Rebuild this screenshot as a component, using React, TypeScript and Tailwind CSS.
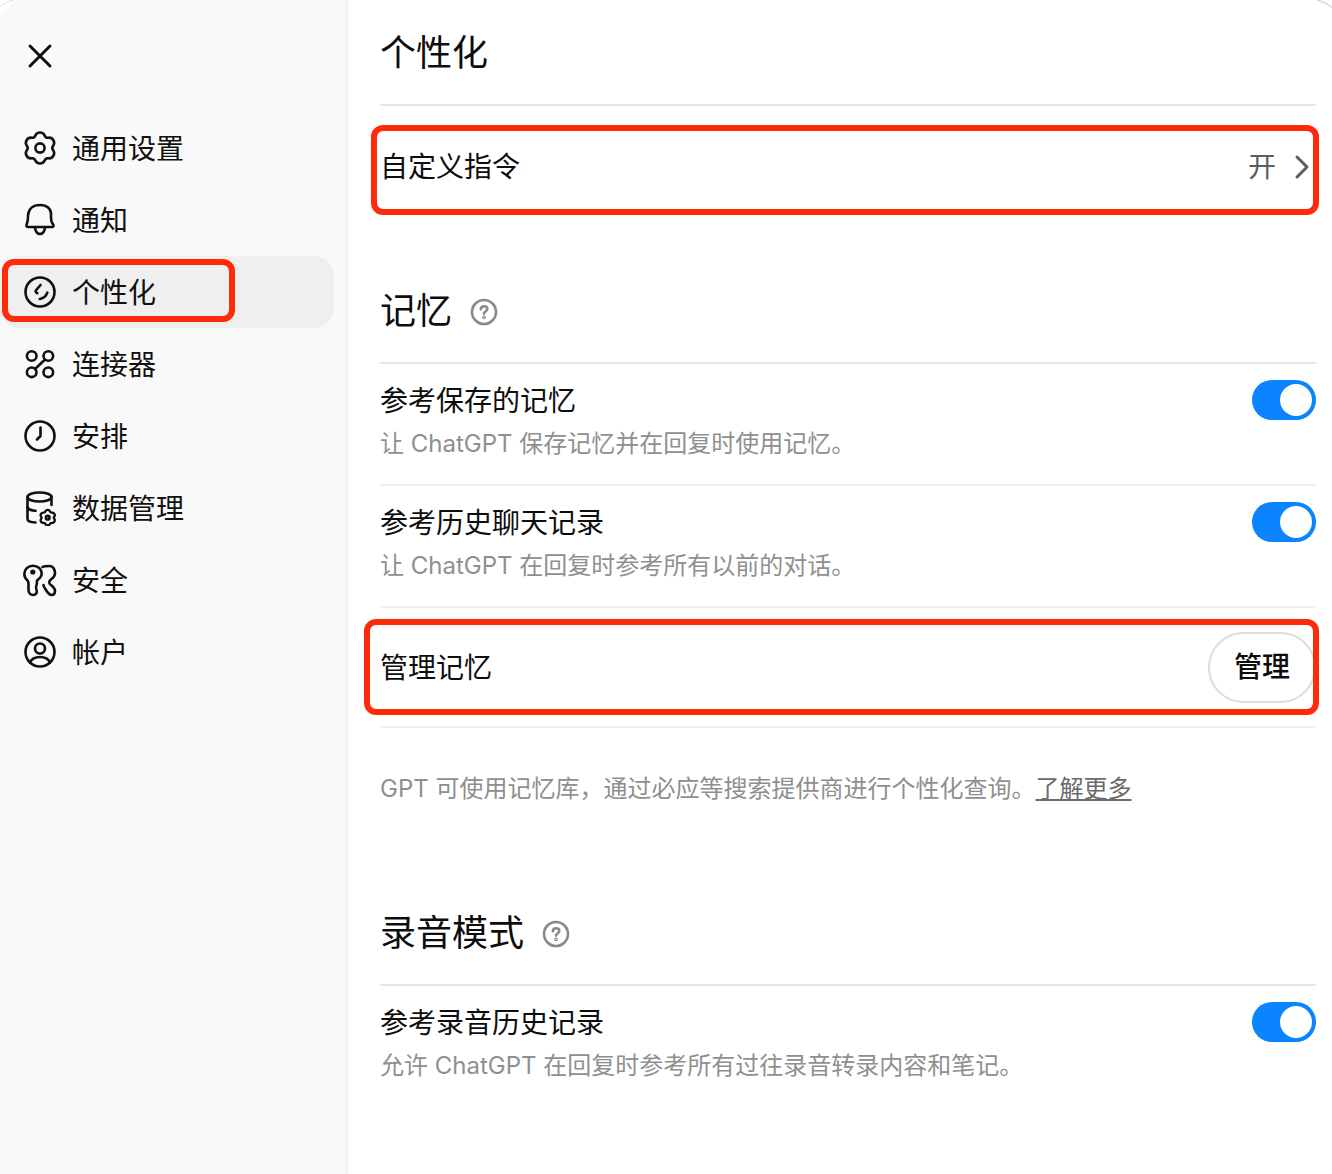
import { ReactNode } from "react";

const stroke = {
  fill: "none",
  stroke: "currentColor",
  strokeWidth: 2.6,
  strokeLinecap: "round" as const,
  strokeLinejoin: "round" as const,
};

// six lobed outline shared by the two gear icons
const gearPath =
  "M13.380 5.310A5.200 5.200 0 0 1 22.620 5.310A3.500 3.500 0 0 0 26.680 7.660A5.200 5.200 0 0 1 31.300 15.660A3.500 3.500 0 0 0 31.300 20.340A5.200 5.200 0 0 1 26.680 28.340A3.500 3.500 0 0 0 22.620 30.690A5.200 5.200 0 0 1 13.380 30.690A3.500 3.500 0 0 0 9.320 28.340A5.200 5.200 0 0 1 4.700 20.340A3.500 3.500 0 0 0 4.700 15.660A5.200 5.200 0 0 1 9.320 7.660A3.500 3.500 0 0 0 13.380 5.310Z";

function Ico({ children }: { children: ReactNode }) {
  return (
    <svg viewBox="0 0 36 36" className="w-9 h-9 shrink-0 text-[#111]" {...stroke}>
      {children}
    </svg>
  );
}

const navItems: { label: string; icon: ReactNode; active?: boolean }[] = [
  {
    label: "通用设置",
    icon: (
      <Ico>
        <circle cx="18" cy="18" r="4.600" />
        <path d={gearPath} />
      </Ico>
    ),
  },
  {
    label: "通知",
    icon: (
      <Ico>
        <path d="M4.500 23.500c0 1 .5 1.500 1.500 1.500h24c1 0 1.500-.5 1.500-1.500 0-1.500-1.500-2-2-4-.5-2-.5-3-.5-6C29.500 7 25 3 18 3S6.500 7 6 13.500c0 3 0 4-.5 6-.5 2-1 2.500-1 4z" />
        <path d="M13 25.500c.5 4 2.500 6.500 5 6.500s4.500-2.500 5-6.500" />
      </Ico>
    ),
  },
  {
    label: "个性化",
    active: true,
    icon: (
      <Ico>
        <circle cx="18" cy="18" r="14.500" />
        <path d="M18.500 11L13.800 16.500c-.5.8 0 2 1.500 2.700" />
        <path d="M25.300 18.700c-1 3-4 5.700-7.500 6.300" />
      </Ico>
    ),
  },
  {
    label: "连接器",
    icon: (
      <Ico>
        <circle cx="9.700" cy="10" r="4.800" />
        <circle cx="26.300" cy="10" r="4.800" />
        <circle cx="9.700" cy="26.300" r="4.800" />
        <circle cx="26.300" cy="26.300" r="4.800" />
        <path d="M23 13.500l-10 9.500" />
      </Ico>
    ),
  },
  {
    label: "安排",
    icon: (
      <Ico>
        <circle cx="18" cy="18" r="14.500" />
        <path d="M18.500 9.500v8.500l-3.500 3.500" />
      </Ico>
    ),
  },
  {
    label: "数据管理",
    icon: (
      <Ico>
        <ellipse cx="17.500" cy="7" rx="12" ry="4.500" />
        <path d="M5.500 7v22c0 2 2.500 3.300 8 3.500" />
        <path d="M5.500 17.500c1 1.800 4 3 8 3.300" />
        <path d="M29.500 7v8" />
        <circle cx="25.700" cy="27.700" r="1.800" />
        <g transform="translate(16.700 18.700) scale(.5)" strokeWidth="4.600">
          <path d={gearPath} />
        </g>
      </Ico>
    ),
  },
  {
    label: "安全",
    icon: (
      <Ico>
        <path d="M11 3.700C6 3.700 2.300 7.500 2.300 12c0 3 1.500 5 3.200 6.500 1 1 1 2 1 3.500v6c0 3 2 5 4.500 5 3 0 4.500-2.500 3.500-5-.7-2-1-3 0-5 1-2 0-3.500.5-4.500 2.500-2 4.700-3.500 4.700-7 0-4.500-3.700-7.800-8.700-7.800z" />
        <circle cx="10.800" cy="10" r="1.300" fill="currentColor" />
        <path d="M20.500 5c1.500-1 5.500-1 7.500-1 3 0 5 3.500 5 7 0 3-1.500 4.500-3.500 6-2 1.500-3 2.500-2 4.500s5.500 3.500 5.500 7.500c0 2.500-1.500 4-3.500 4-2.500 0-4-2.500-5.500-5-1-1.500-2.500-3-2.500-5" />
      </Ico>
    ),
  },
  {
    label: "帐户",
    icon: (
      <Ico>
        <circle cx="18" cy="18" r="14.500" />
        <circle cx="18" cy="14.500" r="5" />
        <path d="M8 28.500c1.500-3.500 5.500-5.500 10-5.500s8.500 2 10 5.500" />
      </Ico>
    ),
  },
];

function Help() {
  return (
    <svg viewBox="0 0 28 28" className="w-7 h-7 mt-[2px] text-[#8a8a8a]" fill="none" stroke="currentColor" strokeWidth="2.600" strokeLinecap="round" strokeLinejoin="round">
      <circle cx="14" cy="14" r="12" />
      <path d="M10.800 11.300c.2-1.800 1.500-3 3.300-3 1.900 0 3.200 1.200 3.200 2.800 0 2.400-3.300 2.400-3.300 4.500" />
      <circle cx="14" cy="19.300" r=".6" />
    </svg>
  );
}

function Toggle() {
  return (
    <div className="w-16 h-10 rounded-full bg-[#0a84ff] flex items-center justify-end pr-1 shrink-0">
      <div className="w-8 h-8 rounded-full bg-white" />
    </div>
  );
}

function ToggleRow({ title, desc, last }: { title: string; desc: string; last?: boolean }) {
  return (
    <div className={`h-[122px] flex justify-between pt-4 ${last ? "" : "border-b-2 border-[#f0f0f0]"}`}>
      <div className="pt-px">
        <div className="text-[28px] leading-10 text-[#0d0d0d]">{title}</div>
        <div className="mt-[3px] text-2xl leading-10 text-[#8f8f8f]">{desc}</div>
      </div>
      <Toggle />
    </div>
  );
}

function SectionTitle({ children, help, className }: { children: string; help?: boolean; className: string }) {
  return (
    <div className={`flex items-center gap-[18px] border-b-2 border-[#e5e5e5] text-4xl text-[#0d0d0d] ${className}`}>
      <span>{children}</span>
      {help && <Help />}
    </div>
  );
}

export default function App() {
  return (
    <div className="relative h-[1174px] w-[1332px] overflow-hidden bg-white font-['Inter','Noto_Sans_CJK_SC',sans-serif] flex">
      <aside className="w-[348px] shrink-0 bg-[#f9f9f9] border-r-2 border-[#f1f1f1] rounded-tl-[24px] pr-3">
        <div className="h-28 pl-[22px] pt-[38px]">
          <svg viewBox="0 0 36 36" className="w-9 h-9 text-[#111]" fill="none" stroke="currentColor" strokeWidth="3" strokeLinecap="round">
            <path d="M8 8l20 20M28 8L8 28" />
          </svg>
        </div>
        <nav className="flex flex-col">
          {navItems.map((item) => (
            <div
              key={item.label}
              className={`h-[72px] flex items-center gap-[14px] pl-[22px] rounded-[20px] text-[28px] text-[#111] ${item.active ? "bg-[#efefef]" : ""}`}
            >
              {item.icon}
              <span className="mt-[2px]">{item.label}</span>
            </div>
          ))}
        </nav>
      </aside>

      <main className="flex-1 pl-8 pr-4">
        <SectionTitle className="h-[106px] pt-[2px]">个性化</SectionTitle>
        <div className="h-[122px] flex items-start justify-between pt-[41px] text-[28px] leading-10">
          <span className="text-[#0d0d0d]">自定义指令</span>
          <span className="flex items-center gap-[18px] text-[#5d5d5d] mr-[6px]">
            开
            <svg viewBox="0 0 16 28" className="w-4 h-7" fill="none" stroke="currentColor" strokeWidth="3" strokeLinecap="round" strokeLinejoin="round">
              <path d="M3 4l10 10L3 24" />
            </svg>
          </span>
        </div>

        <SectionTitle help className="h-[136px] pt-[32px]">记忆</SectionTitle>
        <ToggleRow title="参考保存的记忆" desc="让 ChatGPT 保存记忆并在回复时使用记忆。" />
        <ToggleRow title="参考历史聊天记录" desc="让 ChatGPT 在回复时参考所有以前的对话。" />
        <div className="h-[120px] flex items-center justify-between border-b-2 border-[#f0f0f0]">
          <span className="text-[28px] text-[#0d0d0d] mt-[2px]">管理记忆</span>
          <button className="w-[108px] h-[71px] rounded-full border-2 border-[#dcdcdc] text-[28px] font-medium text-[#0d0d0d]">管理</button>
        </div>
        <p className="h-[132px] pt-[41px] text-2xl leading-10 text-[#8f8f8f]">
          GPT 可使用记忆库，通过必应等搜索提供商进行个性化查询。<span className="underline text-[#6b6b6b]">了解更多</span>
        </p>

        <SectionTitle help className="h-[126px] pt-[22px]">录音模式</SectionTitle>
        <ToggleRow title="参考录音历史记录" desc="允许 ChatGPT 在回复时参考所有过往录音转录内容和笔记。" last />
      </main>

      <svg viewBox="0 0 60 40" className="absolute right-0 top-0 w-[60px] h-10" fill="none" stroke="#d8d8d8" strokeWidth="1.500">
        <path d="M45 0C51 1.500 56 4 60 7.500" />
      </svg>
      <svg viewBox="0 0 60 40" className="absolute left-0 top-0 w-[60px] h-10" fill="none" stroke="#e2e2e2" strokeWidth="1">
        <path d="M0 7C3 4 8 1.500 14 0" />
      </svg>
      <div className="absolute left-[2px] top-[259px] w-[233px] h-[63px] rounded-xl border-[6px] border-[#ff2a0a]" />
      <div className="absolute left-[371px] top-[125px] w-[948px] h-[90px] rounded-xl border-[6px] border-[#ff2a0a]" />
      <div className="absolute left-[364px] top-[619px] w-[955px] h-[96px] rounded-xl border-[6px] border-[#ff2a0a]" />
    </div>
  );
}
